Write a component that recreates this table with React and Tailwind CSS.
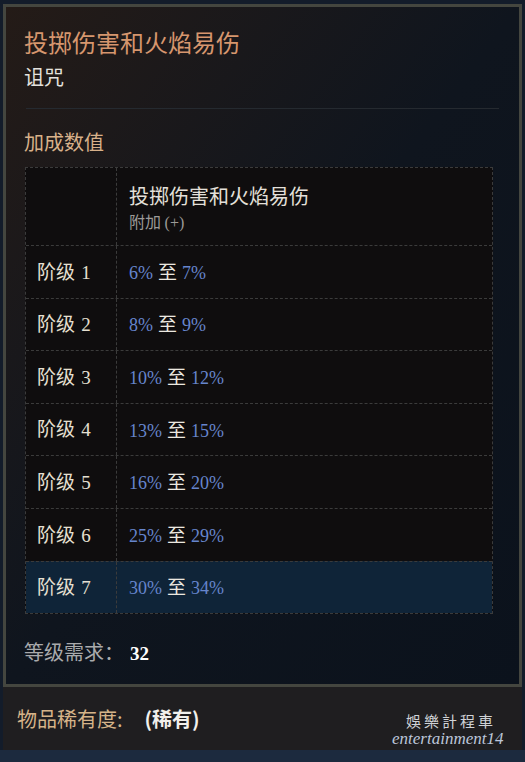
import React from 'react';

const cjk = { fontFamily: '"Noto Sans CJK SC", "Noto Sans", sans-serif' };
const serif = { fontFamily: '"Liberation Serif", "DejaVu Serif", serif' };

const tiers = [
    { lv: 1, min: 6, max: 7 },
    { lv: 2, min: 8, max: 9 },
    { lv: 3, min: 10, max: 12 },
    { lv: 4, min: 13, max: 15 },
    { lv: 5, min: 16, max: 20 },
    { lv: 6, min: 25, max: 29 },
    { lv: 7, min: 30, max: 34 },
];

const TierRow = ({ tier, active }) => (
    <div className={`flex h-[52.6px] border-t border-dashed border-[#3b3b3b] ${active ? 'bg-[#0f2438]' : ''}`}>
        <div className="w-[91px] flex items-center pl-[11px] border-r border-dashed border-[#3b3b3b] text-[19px] text-[#e6e0d2]">
            <span>阶级 <span style={serif} className="ml-[2px] text-[19px]">{tier.lv}</span></span>
        </div>
        <div className="flex-1 flex items-center pl-[12px] text-[19px]">
            <span>
                <span style={serif} className="text-[18px] text-[#6685cc]">{tier.min}%</span>
                <span className="mx-[5px] text-[#ece8e0]">至</span>
                <span style={serif} className="text-[18px] text-[#6685cc]">{tier.max}%</span>
            </span>
        </div>
    </div>
);

const App = () => {
    return (
        <div style={cjk} className="w-[525px] h-[762px] bg-[#131c2a] flex flex-col overflow-hidden">
            {/* Tarjeta principal */}
            <div className="mt-[4px] mx-[3px] h-[683px] border-[3px] border-[#44463f] bg-gradient-to-br from-[#241b17] via-[#0f151e] to-[#0b121c] px-[18px] pt-[19px]">
                <h1 className="text-[24px] leading-[32px] text-[#d6966e]">投掷伤害和火焰易伤</h1>
                <p className="mt-[5px] text-[20px] leading-[28px] text-[#e4e2de]">诅咒</p>
                <div className="mt-[17px] h-px bg-[#252a30] mx-[2px]" />

                <h2 className="mt-[19px] text-[20px] leading-[28px] text-[#d8b18a]">加成数值</h2>

                {/* Tabla de niveles */}
                <div className="mt-[11px] ml-[1px] mr-[8px] border border-dashed border-[#3b3b3b] bg-[#0f0d0e]">
                    <div className="flex h-[77px]">
                        <div className="w-[91px] border-r border-dashed border-[#3b3b3b]" />
                        <div className="flex-1 pl-[12px] pt-[14px]">
                            <div className="text-[20px] leading-[28px] text-[#e4e0da]">投掷伤害和火焰易伤</div>
                            <div className="text-[16px] leading-[22px] text-[#9c9a98]">附加 <span style={serif}>(+)</span></div>
                        </div>
                    </div>
                    {tiers.map((t) => (
                        <TierRow key={t.lv} tier={t} active={t.lv === 7} />
                    ))}
                </div>

                <div className="mt-[24px] flex items-baseline text-[20px] leading-[28px]">
                    <span className="text-[#a9aaac]">等级需求：</span>
                    <span style={serif} className="ml-[6px] font-bold text-[19px] text-white">32</span>
                </div>
            </div>

            {/* Rareza */}
            <div className="relative h-[63px] mx-[3px] bg-[#1f1e20] flex items-center pl-[14px]">
                <span className="text-[20px] text-[#d6b489]">物品稀有度:</span>
                <span className="ml-[22px] text-[20px] font-bold text-[#f2f0ec]">(稀有)</span>
                <div className="absolute left-[389px] bottom-[3px] flex flex-col items-start">
                    <span className="ml-[14px] h-[19px] leading-[19px] text-[15px] tracking-[3px] text-[#cfd2d6]" style={{ fontFamily: '"Noto Sans CJK TC", serif' }}>娛樂計程車</span>
                    <span className="h-[17px] leading-[17px] text-[17px] italic text-[#bcc6da]" style={{ fontFamily: '"Liberation Serif", serif' }}>entertainment14</span>
                </div>
            </div>
            <div className="flex-1 bg-[#1c2a3e]" />
        </div>
    );
};

export default App;
